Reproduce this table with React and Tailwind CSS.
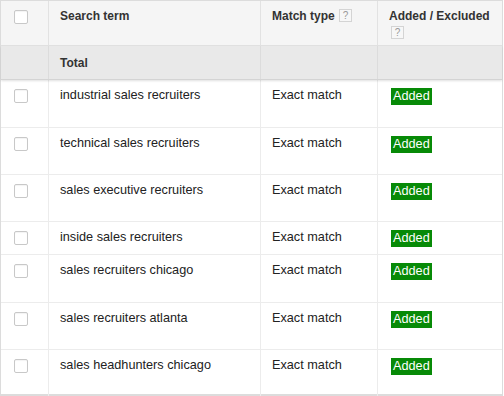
import React from "react";

const terms = [
  { term: "industrial sales recruiters", h: "h-[48px]" },
  { term: "technical sales recruiters", h: "h-[47px]" },
  { term: "sales executive recruiters", h: "h-[47px]" },
  { term: "inside sales recruiters", h: "h-[33px]" },
  { term: "sales recruiters chicago", h: "h-[48px]" },
  { term: "sales recruiters atlanta", h: "h-[47px]" },
  { term: "sales headhunters chicago", h: "h-[46px]" },
];

const cols = "grid grid-cols-[48px_212px_117px_1fr]";

const Checkbox = () => (
  <span className="block w-[14px] h-[14px] border border-[#c8c8c8] rounded-[2px] bg-white shadow-[inset_0_1px_1px_rgba(0,0,0,0.05)]" />
);

const Help = ({ className = "" }) => (
  <span
    className={`inline-flex items-center justify-center w-[13px] h-[13px] border border-[#d4d4d4] bg-[#f7f7f7] text-[10px] leading-none font-normal text-[#999] align-middle ${className}`}
  >
    ?
  </span>
);

const SearchTerms = () => {
  return (
    <div
      className="w-[504px] h-[396px] bg-white text-[12.7px] leading-[15px] text-[#222]"
      style={{ fontFamily: '"Liberation Sans", Arial, sans-serif' }}
    >
      <div className="w-[503px] h-[396px] border border-[#dcdcdc] border-b-2">
        {/* header */}
        <div className={`${cols} h-[45px] bg-[#f5f5f5] border-b border-[#e2e2e2] text-[12px] font-bold text-[#333]`}>
          <div className="border-r border-[#e2e2e2] pl-[13px] pt-[9px]">
            <Checkbox />
          </div>
          <div className="border-r border-[#e2e2e2] pl-[11px] pt-[8px]">Search term</div>
          <div className="border-r border-[#e2e2e2] pl-[11px] pt-[8px]">
            Match type <Help className="ml-[1px] -mt-[2px]" />
          </div>
          <div className="pl-[11px] pt-[8px]">
            <div>Added / Excluded</div>
            <Help className="ml-[2px] mt-[2px]" />
          </div>
        </div>

        {/* totals */}
        <div className={`${cols} relative z-10 h-[34px] bg-[#e9e9e9] border-b border-[#d4d4d4] shadow-[0_1px_2px_rgba(0,0,0,0.12)] text-[12px] font-bold text-[#333]`}>
          <div className="border-r border-[#dcdcdc]" />
          <div className="border-r border-[#dcdcdc] pl-[11px] pt-[10px]">Total</div>
          <div className="border-r border-[#dcdcdc]" />
          <div />
        </div>

        {terms.map((row, idx) => (
          <div
            key={idx}
            className={`${cols} ${row.h} ${idx !== terms.length - 1 ? "border-b border-[#ececec]" : ""}`}
          >
            <div className="border-r border-[#ececec] pl-[13px] pt-[9px]">
              <Checkbox />
            </div>
            <div className="border-r border-[#ececec] pl-[11px] pt-[8px]">{row.term}</div>
            <div className="border-r border-[#ececec] pl-[11px] pt-[8px]">Exact match</div>
            <div className="pl-[13px] pt-[8px]">
              <span className="inline-block bg-[#078a07] text-white px-[2px] leading-[17px]">
                Added
              </span>
            </div>
          </div>
        ))}
      </div>
    </div>
  );
};

export default function App() {
  return <SearchTerms />;
}
